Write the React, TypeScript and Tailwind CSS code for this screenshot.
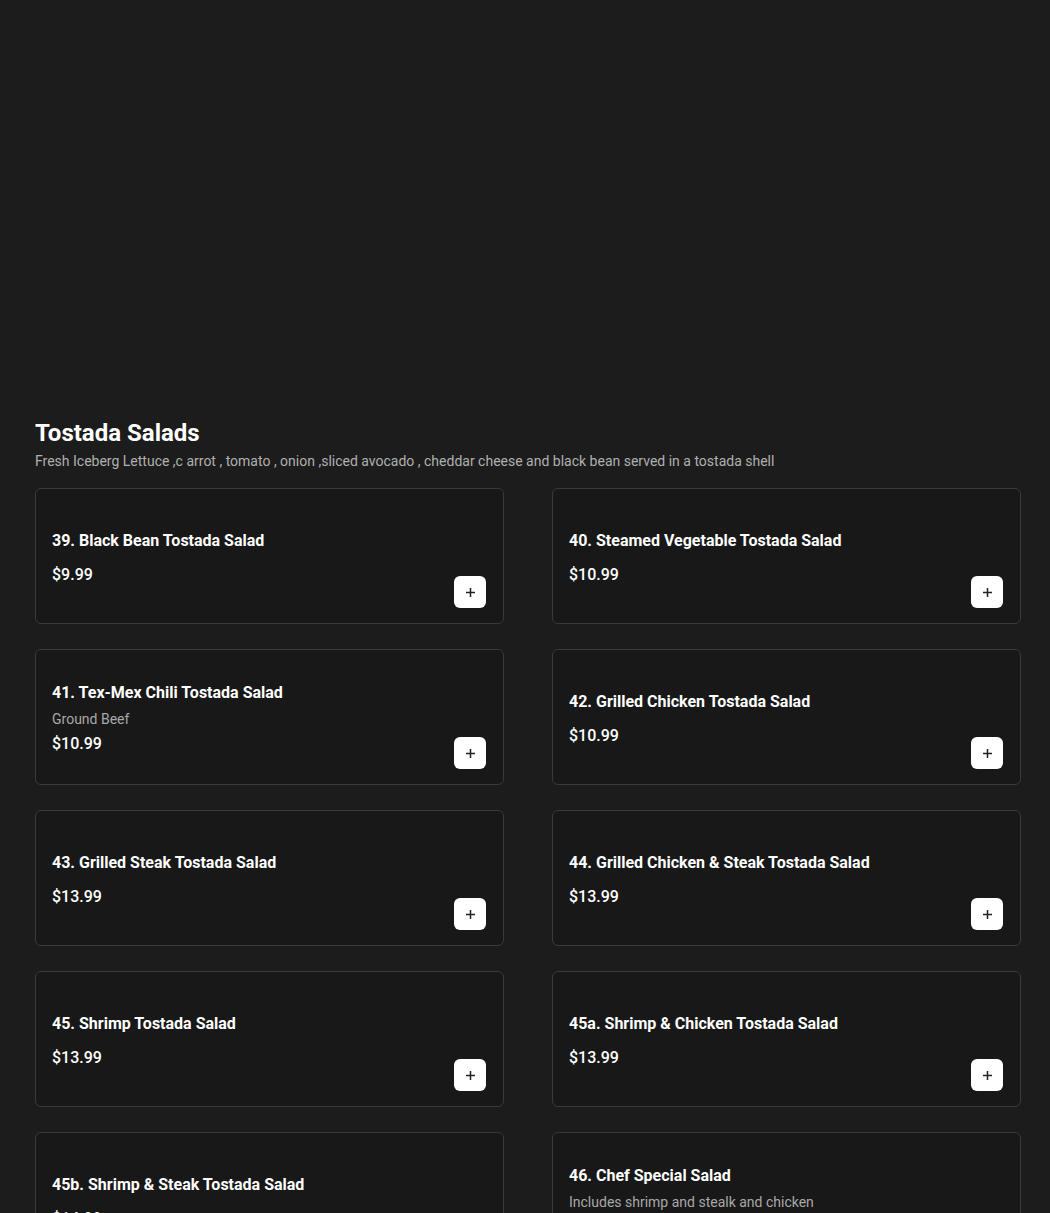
import React from "react";

type Item = { name: string; desc?: string; price: string };

const items: Item[] = [
  { name: "39. Black Bean Tostada Salad", price: "$9.99" },
  { name: "40. Steamed Vegetable Tostada Salad", price: "$10.99" },
  { name: "41. Tex-Mex Chili Tostada Salad", desc: "Ground Beef", price: "$10.99" },
  { name: "42. Grilled Chicken Tostada Salad", price: "$10.99" },
  { name: "43. Grilled Steak Tostada Salad", price: "$13.99" },
  { name: "44. Grilled Chicken & Steak Tostada Salad", price: "$13.99" },
  { name: "45. Shrimp Tostada Salad", price: "$13.99" },
  { name: "45a. Shrimp & Chicken Tostada Salad", price: "$13.99" },
  { name: "45b. Shrimp & Steak Tostada Salad", price: "$14.99" },
  { name: "46. Chef Special Salad", desc: "Includes shrimp and stealk and chicken", price: "$14.99" },
];

function Card({ item }: { item: Item }) {
  return (
    <div
      className={`flex h-[136px] rounded-md border border-[#3a3a3a] bg-[#181818] pl-4 pr-[17px] ${
        item.desc ? "pt-[17px] pb-[15px]" : "pt-[18px] pb-[14px]"
      }`}
    >
      <div className="flex flex-1 flex-col justify-center">
        <div className="text-[16px] font-bold leading-6 text-white">{item.name}</div>
        {item.desc && (
          <div className="mt-[4px] text-[14px] leading-5 text-[#a8a8a8]">{item.desc}</div>
        )}
        <div className={`${item.desc ? "mt-[3px]" : "mt-[10px]"} text-[16px] font-medium leading-6 text-white`}>
          {item.price}
        </div>
      </div>
      <div className={`${item.desc ? "mb-0" : "mb-[1px]"} flex items-end`}>
        <button className="flex h-8 w-8 items-center justify-center rounded-md bg-white">
          <svg width="11" height="11" viewBox="0 0 11 11">
            <path d="M5.5 1v9M1 5.5h9" stroke="#222" strokeWidth="1.5" />
          </svg>
        </button>
      </div>
    </div>
  );
}

export default function App() {
  return (
    <div
      className="h-[1213px] overflow-hidden bg-[#1c1c1c]"
      style={{ fontFamily: "Roboto, 'Noto Sans', sans-serif" }}
    >
      <div className="h-[417px]" />
      <div className="pl-[35px] pr-[29px]">
        <h2 className="text-[24px] font-bold leading-8 text-white">Tostada Salads</h2>
        <p className="mt-[2px] text-[14px] leading-5 text-[#b0b0b0]">
          Fresh Iceberg Lettuce ,c arrot , tomato , onion ,sliced avocado , cheddar cheese and black bean served in a tostada shell
        </p>
        <div className="mt-[17px] grid grid-cols-2 gap-x-[48px] gap-y-[25px]">
          {items.map((it) => (
            <Card key={it.name} item={it} />
          ))}
        </div>
      </div>
    </div>
  );
}
